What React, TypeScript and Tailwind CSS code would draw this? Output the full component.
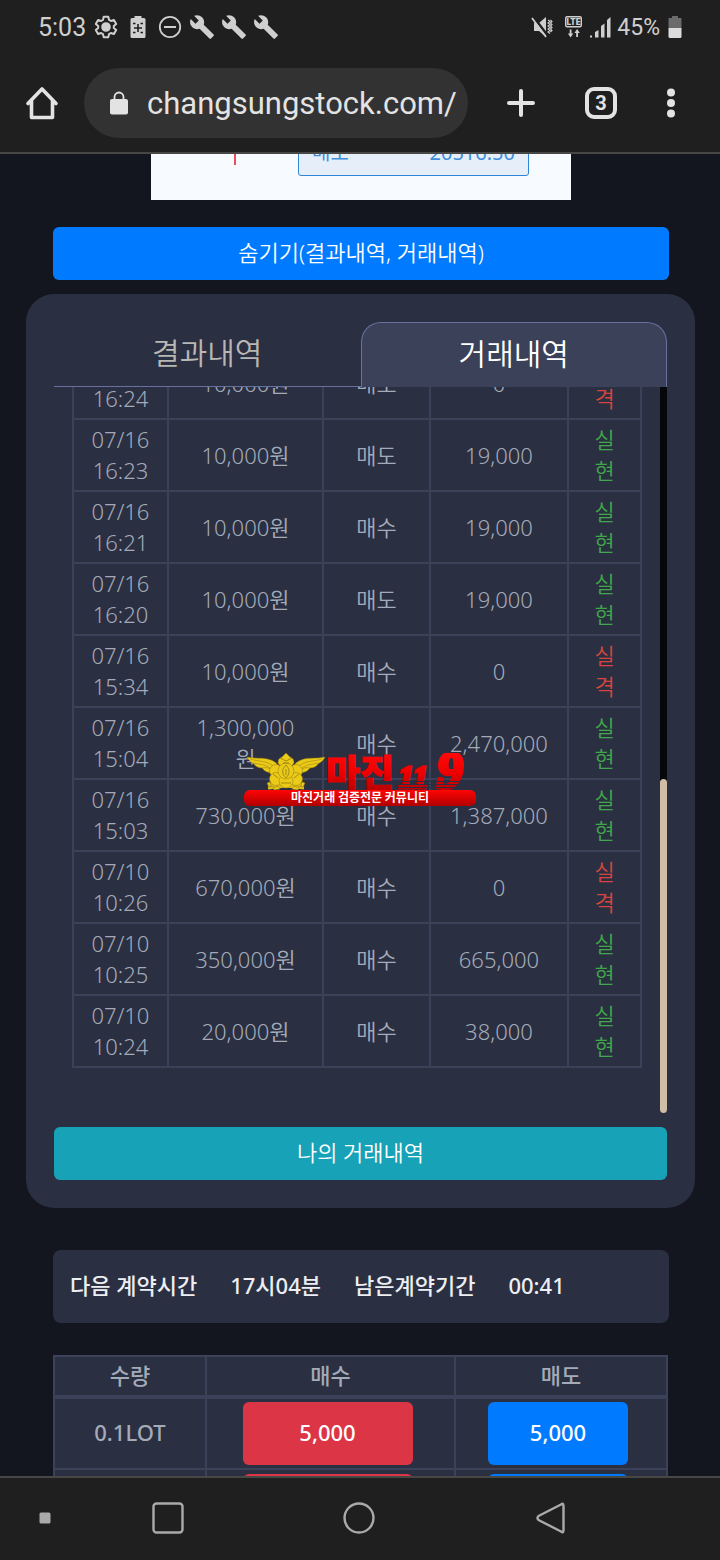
import React from "react";

type Trade = { date: string; time: string; amount: string; side: string; profit: string; won: boolean };

const trades: Trade[] = [
  { date: "07/16", time: "16:24", amount: "10,000원", side: "매도", profit: "0", won: false },
  { date: "07/16", time: "16:23", amount: "10,000원", side: "매도", profit: "19,000", won: true },
  { date: "07/16", time: "16:21", amount: "10,000원", side: "매수", profit: "19,000", won: true },
  { date: "07/16", time: "16:20", amount: "10,000원", side: "매도", profit: "19,000", won: true },
  { date: "07/16", time: "15:34", amount: "10,000원", side: "매수", profit: "0", won: false },
  { date: "07/16", time: "15:04", amount: "1,300,000원", side: "매수", profit: "2,470,000", won: true },
  { date: "07/16", time: "15:03", amount: "730,000원", side: "매수", profit: "1,387,000", won: true },
  { date: "07/10", time: "10:26", amount: "670,000원", side: "매수", profit: "0", won: false },
  { date: "07/10", time: "10:25", amount: "350,000원", side: "매수", profit: "665,000", won: true },
  { date: "07/10", time: "10:24", amount: "20,000원", side: "매수", profit: "38,000", won: true },
];

const lots = [
  { size: "0.1LOT", price: "5,000" },
  { size: "0.2LOT", price: "10,000" },
];

const Wrench = () => (
  <svg viewBox="0 0 24 24" className="size-[26px]" fill="currentColor" aria-hidden="true">
    <path d="M22.7 19l-9.1-9.1c.9-2.3.4-5-1.5-6.9-2-2-5-2.4-7.4-1.3L9 6 6 9 1.6 4.7C.4 7.1.9 10.1 2.9 12.1c1.9 1.9 4.6 2.4 6.9 1.5l9.1 9.1c.4.4 1 .4 1.4 0l2.3-2.3c.5-.4.5-1.1.1-1.4z" />
  </svg>
);

function StatusBar() {
  return (
    <div className="flex h-[54px] items-center justify-between px-[38px] text-[#cfcfcf]">
      <div className="flex items-center">
        <span className="mr-[8px] text-[25px] leading-none">5:03</span>
        <svg viewBox="0 0 24 24" className="mr-[8px] size-[24px]" fill="none" stroke="currentColor" strokeWidth="2" strokeLinejoin="round" aria-hidden="true">
          <path d="M9.7 1.8h4.6l.7 3.1 1.900 1.100 3-1 2.300 4-2.400 2v2l2.400 2-2.300 4-3-1-1.900 1.100-.7 3.100H9.700L9 19.100 7.100 18l-3 1-2.300-4 2.400-2v-2l-2.400-2 2.300-4 3 1L9 4.900z" />
          <circle cx="12" cy="12" r="3.800" fill="currentColor" />
        </svg>
        <svg viewBox="0 0 24 24" className="mr-[8px] size-[24px]" aria-hidden="true">
          <path d="M8.500 1h7v2H18a1.500 1.500 0 0 1 1.500 1.500v17A1.500 1.500 0 0 1 18 23H6a1.500 1.500 0 0 1-1.500-1.500v-17A1.500 1.500 0 0 1 6 3h2.500z" fill="currentColor" />
          <path d="M12 9v8M8 13h8M7 8.500h2.500M14.500 8.500H17M7 17.500h2.500M14.500 17.500H17" stroke="#1f1f1f" strokeWidth="1.600" />
        </svg>
        <svg viewBox="0 0 24 24" className="mr-[7px] size-[24px]" fill="none" stroke="currentColor" aria-hidden="true">
          <circle cx="12" cy="12" r="10.200" strokeWidth="1.800" />
          <path d="M6 12h12" strokeWidth="2" />
        </svg>
        <div className="flex gap-[6px]"><Wrench /><Wrench /><Wrench /></div>
      </div>
      <div className="flex items-center">
        <svg viewBox="0 0 24 24" className="mr-[9px] size-[24px]" fill="currentColor" aria-hidden="true">
          <path d="M4 8h5l7-6v20l-7-6H4z" />
          <path d="M3.500 2L18 21" stroke="#1f1f1f" strokeWidth="2.500" />
          <path d="M2 3L16 22" stroke="currentColor" strokeWidth="1.800" />
          <path d="M18 5l2 1.500-2 1.500 2 1.500-2 1.500 2 1.500-2 1.500 2 1.500-2 1.500 2 1.500M20.500 5l1.500 1.500L20.500 8l1.500 1.500L20.500 11l1.500 1.500L20.500 14l1.500 1.500L20.500 17" fill="none" stroke="currentColor" strokeWidth="1.100" />
        </svg>
        <svg viewBox="0 0 20 24" className="mr-[6px] h-[24px] w-[20px]" aria-hidden="true">
          <rect x="2.700" y="1.700" width="15.600" height="10" rx="1.500" fill="none" stroke="#cfcfcf" strokeWidth="1.400" />
          <text x="10.500" y="10.200" textAnchor="middle" fontFamily="Roboto" fontSize="8.500" fontWeight="900" fill="#cfcfcf">LTE</text>
          <path d="M6.700 14.500h1.800v4h1.800l-2.700 4-2.700-4h1.800zM13.200 22v-4h-1.800l2.700-4 2.700 4H15v4z" fill="#cfcfcf" />
        </svg>
        <svg viewBox="0 0 22 24" className="mr-[6px] h-[24px] w-[22px]" fill="currentColor" aria-hidden="true">
          <path d="M1 20.500h2v2H1zM6 17l3.500-2v7.500H6zM12 11l3.500-2.500v14H12zM18 5l3.500-3v20.500H18z" />
        </svg>
        <span className="mr-[8px] text-[23px] leading-none">45%</span>
        <svg viewBox="0 0 14 24" className="h-[24px] w-[14px]" aria-hidden="true">
          <path d="M4 1h6v2h3.500v10H.500V3H4z" fill="#6b6b6b" />
          <path d="M.500 13h13v8.500a1.500 1.500 0 0 1-1.500 1.500H2a1.500 1.500 0 0 1-1.500-1.500z" fill="#dcdcdc" />
        </svg>
      </div>
    </div>
  );
}

function BrowserBar() {
  return (
    <div className="flex h-[98px] items-start pt-[14px] text-[#e3e3e3]">
      <button aria-label="홈" className="flex h-[70px] w-[84px] items-center justify-center">
        <svg viewBox="0 0 34 34" className="size-[34px]" fill="none" stroke="currentColor" strokeWidth="3.600" strokeLinejoin="round" strokeLinecap="round" aria-hidden="true">
          <path d="M3 17.500L17 3l14 14.500M6.500 15v16.500h21V15" />
        </svg>
      </button>
      <form className="flex h-[70px] min-w-0 flex-1 items-center rounded-full bg-[#323232] pl-[25px]" onSubmit={(e) => e.preventDefault()}>
        <svg viewBox="0 0 20 24" className="mr-[18px] h-[24px] w-[20px] shrink-0" aria-hidden="true">
          <rect x="1" y="8" width="18" height="15.500" rx="2" fill="currentColor" />
          <path d="M5.500 9V6a4.500 4.500 0 0 1 9 0v3" fill="none" stroke="currentColor" strokeWidth="1.800" />
        </svg>
        <input aria-label="주소" defaultValue="changsungstock.com/" className="w-full min-w-0 bg-transparent pt-[3px] text-[31px] outline-none" />
      </form>
      <div className="flex h-[70px] w-[252px] items-center pl-[36px]">
        <button aria-label="새 탭">
          <svg viewBox="0 0 34 34" className="size-[34px]" fill="none" stroke="currentColor" strokeWidth="4" strokeLinecap="round" aria-hidden="true">
            <path d="M17 5v24M5 17h24" />
          </svg>
        </button>
        <button aria-label="탭 3개" className="ml-[47px] flex size-[32px] items-center justify-center rounded-[9px] border-[4px] border-[#e3e3e3] text-[20px] font-bold leading-none">3</button>
        <button aria-label="메뉴" className="ml-[37px]">
          <svg viewBox="0 0 34 34" className="size-[34px]" fill="currentColor" aria-hidden="true">
            <circle cx="17" cy="6.500" r="4" /><circle cx="17" cy="17" r="4" /><circle cx="17" cy="27.500" r="4" />
          </svg>
        </button>
      </div>
    </div>
  );
}

function WatermarkLogo() {
  return (
    <svg viewBox="0 0 232 54" className="absolute left-[190px] top-[366px] h-[54px] w-[232px]" role="img" aria-label="마진119">
      <defs>
        <linearGradient id="red" x1="0" y1="0" x2="0" y2="38" gradientUnits="userSpaceOnUse">
          <stop offset="0" stopColor="#ff0808" /><stop offset="0.500" stopColor="#f00000" /><stop offset="1" stopColor="#b80000" />
        </linearGradient>
        <linearGradient id="band" x1="0" y1="0" x2="0" y2="1">
          <stop offset="0" stopColor="#ff0505" /><stop offset="1" stopColor="#b00000" />
        </linearGradient>
      </defs>
      <g fill="#eccb18" stroke="#8d7812" strokeWidth="0.500">
        <path d="M3 4c9 2 17 0 24 3 5 2 9 6 9 10l-6 3c-6 0-10-2-12-5-4 0-7-2-8-4C7 9 4 7 3 4z" />
        <path d="M81 4c-9 2-17 0-24 3-5 2-9 6-9 10l6 3c6 0 10-2 12-5 4 0 7-2 8-4 3-2 6-4 7-7z" />
        <path d="M6 6c9 3 17 1 24 8M10 10c7 2 12 1 17 6M18 15c4-1 8 0 10 2M78 6c-9 3-17 1-24 8M74 10c-7 2-12 1-17 6M66 15c-4-1-8 0-10 2" fill="none" />
        <path d="M24 31l36 4M60 31l-36 4" fill="none" stroke="#e0bd18" strokeWidth="3" />
        <path d="M23 30l3-1 1 4-2 1zM61 30l-3-1-1 4 2 1zM29 35l5-2 2 3-6 1zM55 35l-5-2-2 3 6 1z" />
        <circle cx="32" cy="18" r="6.500" /><circle cx="52" cy="18" r="6.500" />
        <circle cx="32" cy="26" r="6.500" /><circle cx="52" cy="26" r="6.500" />
        <circle cx="42" cy="28" r="7" />
        <path d="M34 10c0-3 1-5 4-6l4-4 4 4c3 1 4 3 4 6l-3 4H37z" />
        <circle cx="42" cy="18" r="8" />
        <path d="M42 12c-5 5-4 9 0 13 4-4 4-9 0-13zM42 16v6M36 5l6 3 6-3M39 10h6M29 21l5 4M55 21l-5 4M37 30h10" fill="none" strokeWidth="0.800" />
      </g>
      <text x="82" y="34" fontFamily="Noto Sans CJK KR" fontWeight="900" fontSize="37" fill="url(#red)" stroke="url(#red)" strokeWidth="1">마진</text>
      <g fill="url(#red)" stroke="url(#red)" fontFamily="Liberation Serif" fontStyle="italic" fontWeight="700">
        <text x="154" y="35" fontSize="32" strokeWidth="3">11</text>
        <text x="193" y="35" fontSize="52" strokeWidth="4">9</text>
      </g>
      <path d="M150 28.500h72M150 31.500h72M150 34.500h72" stroke="#2b2f42" strokeWidth="1" />
      <rect x="0" y="37" width="232" height="16" rx="6" fill="url(#band)" />
      <text x="116" y="49" textAnchor="middle" fontFamily="Noto Sans CJK KR" fontWeight="700" fontSize="12" fill="#fff">마진거래 검증전문 커뮤니티</text>
    </svg>
  );
}

function HistoryPanel() {
  return (
    <section className="ml-[26px] mr-[25px] mt-[14px] rounded-[28px] bg-[#2b2f42] p-[28px]">
      <div role="tablist" className="grid h-[65px] grid-cols-2 text-[30px] leading-none">
        <button role="tab" aria-selected="false" className="border-b border-[#66719f] pb-[2px] font-[350] text-[#b9b7b3]">결과내역</button>
        <button role="tab" aria-selected="true" className="rounded-t-[20px] border border-b-0 border-[#66719f] bg-[#3b4159] pb-[2px] font-[350] text-white">거래내역</button>
      </div>
      <div className="relative flex h-[726px]">
        <div className="flex min-w-0 flex-1 flex-col justify-end overflow-hidden px-[18px] pb-[45px]">
          <table className="w-full table-fixed border-collapse text-center text-[22px] font-[350] leading-[31px] text-[#a4abb8]">
            <colgroup>
              <col className="w-[95px]" /><col className="w-[155px]" /><col className="w-[107px]" /><col className="w-[138px]" /><col />
            </colgroup>
            <tbody>
              {trades.map((t) => (
                <tr key={t.date + t.time} className="h-[72px]">
                  <td className="border-2 border-[#3b4159]">{t.date}<br />{t.time}</td>
                  <td className="break-all border-2 border-[#3b4159] px-[20px]">{t.amount}</td>
                  <td className="border-2 border-[#3b4159]">{t.side}</td>
                  <td className="border-2 border-[#3b4159]">{t.profit}</td>
                  <td className={t.won ? "border-2 border-[#3b4159] text-[#3fa84a]" : "border-2 border-[#3b4159] text-[#d8453f]"}>
                    실<br />{t.won ? "현" : "격"}
                  </td>
                </tr>
              ))}
            </tbody>
          </table>
        </div>
        <div className="flex w-[7px] flex-col justify-end rounded-b-full bg-[#06070b]">
          <div className="h-[46%] rounded-full bg-[#cfbda6]" />
        </div>
        <WatermarkLogo />
      </div>
      <button className="mt-[14px] h-[53px] w-full rounded-[6px] bg-[#17a2b8] pb-[2px] text-[22px] font-[350] text-white">나의 거래내역</button>
    </section>
  );
}

function OrderTable() {
  return (
    <table className="ml-[53px] mr-[52px] mt-[32px] table-fixed border-collapse bg-[#2b2f42] text-center text-[22px] font-medium text-[#a4abb8]">
      <colgroup>
        <col className="w-[152px]" /><col className="w-[249px]" /><col />
      </colgroup>
      <thead>
        <tr className="h-[41px]">
          {["수량", "매수", "매도"].map((h) => (
            <th key={h} className="border-2 border-b-4 border-[#3b4159] pb-[3px] font-medium leading-none">{h}</th>
          ))}
        </tr>
      </thead>
      <tbody>
        {lots.map((l) => (
          <tr key={l.size} className="h-[72px]">
            <td className="border-2 border-[#3b4159] pb-[2px]">{l.size}</td>
            <td className="border-2 border-[#3b4159] pr-[6px]">
              <button className="h-[63px] w-[170px] rounded-[6px] bg-[#dc3545] pb-[2px] align-middle text-white">{l.price}</button>
            </td>
            <td className="border-2 border-[#3b4159] pr-[6px]">
              <button className="h-[63px] w-[140px] rounded-[6px] bg-[#007bff] pb-[2px] align-middle text-white">{l.price}</button>
            </td>
          </tr>
        ))}
      </tbody>
    </table>
  );
}

export default function App() {
  return (
    <div className="flex h-screen flex-col overflow-hidden bg-[#13151f] font-['Noto_Sans','Noto_Sans_CJK_KR',sans-serif]">
      <header className="shrink-0 border-b-2 border-[#474745] bg-[#1f1f1f] font-['Roboto',sans-serif]">
        <StatusBar />
        <BrowserBar />
      </header>
      <main className="flex min-h-0 flex-1 flex-col overflow-hidden *:shrink-0">
        <div className="ml-[151px] mr-[149px] flex h-[46px] flex-col justify-end overflow-hidden bg-[#f7fbff] pb-[24px]">
          <div className="flex items-end">
            <div className="mb-[11px] ml-[83px] h-[30px] w-[2px] bg-[#e8505b]" />
            <div className="ml-[62px] mr-[42px] flex h-[40px] flex-1 items-start justify-between rounded-[3px] border border-[#2f86d6] bg-[#e6eefa] px-[13px] pt-[2px] text-[20px] leading-[28px] text-[#3f8fdc]">
              <span>매도</span><span>20516.50</span>
            </div>
          </div>
        </div>
        <button className="ml-[53px] mr-[51px] mt-[27px] h-[53px] rounded-[6px] bg-[#007bff] pb-[2px] text-[22px] font-[350] text-white">숨기기(결과내역, 거래내역)</button>
        <HistoryPanel />
        <div className="ml-[53px] mr-[51px] mt-[42px] flex h-[73px] items-center gap-[33px] rounded-[8px] bg-[#2b2f42] pb-[2px] pl-[17px] text-[22px] font-medium text-[#eceef2]">
          <span>다음 계약시간</span><span>17시04분</span><span>남은계약기간</span><span>00:41</span>
        </div>
        <OrderTable />
      </main>
      <nav className="flex h-[84px] shrink-0 items-center border-t-2 border-[#474745] bg-[#1f1f1f] pb-[2px] pl-[39px] text-[#aaaaaa]">
        <svg viewBox="0 0 12 12" className="size-[12px]" aria-hidden="true"><rect x="0.500" y="0.500" width="11" height="11" rx="1.500" fill="currentColor" /></svg>
        <button aria-label="최근 앱" className="ml-[100px]">
          <svg viewBox="0 0 34 34" className="size-[34px]" fill="none" stroke="currentColor" strokeWidth="2.400"><rect x="2.500" y="2.500" width="29" height="29" rx="3" /></svg>
        </button>
        <button aria-label="홈 화면" className="ml-[157px]">
          <svg viewBox="0 0 34 34" className="size-[34px]" fill="none" stroke="currentColor" strokeWidth="2.400"><circle cx="17" cy="17" r="14.500" /></svg>
        </button>
        <button aria-label="뒤로" className="ml-[158px]">
          <svg viewBox="0 0 34 34" className="size-[34px]" fill="none" stroke="currentColor" strokeWidth="2.400" strokeLinejoin="round"><path d="M27 3.500Q29.500 1.500 29.500 5v24q0 3.500-2.500 1.500L4.500 19Q2.500 17 4.500 15z" /></svg>
        </button>
      </nav>
    </div>
  );
}
